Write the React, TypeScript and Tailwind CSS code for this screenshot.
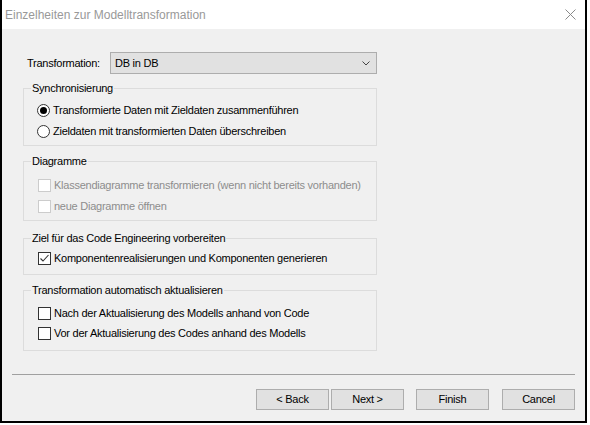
import React from "react";

const font = { fontFamily: '"Liberation Sans", Arial, sans-serif' };

function Radio({ checked, label }: { checked?: boolean; label: string }) {
  return (
    <div className="flex h-[21px] items-center pl-[13px]">
      <svg width="13" height="13" viewBox="0 0 13 13" className="shrink-0">
        <circle cx="6.5" cy="6.5" r="6" fill="#fff" stroke="#333" strokeWidth="1" />
        {checked && <circle cx="6.5" cy="6.5" r="3.5" fill="#000" />}
      </svg>
      <span className="ml-[3px] text-[11px] tracking-[-0.25px] text-black">{label}</span>
    </div>
  );
}

function Check({
  checked,
  disabled,
  label,
  h = "h-[21px]",
}: {
  checked?: boolean;
  disabled?: boolean;
  label: string;
  h?: string;
}) {
  return (
    <div className={`flex ${h} items-center pl-[14px]`}>
      <svg width="13" height="13" viewBox="0 0 13 13" className="shrink-0">
        <rect
          x="0.5"
          y="0.5"
          width="12"
          height="12"
          fill="#fff"
          stroke={disabled ? "#cccccc" : "#333333"}
          strokeWidth="1"
        />
        {checked && (
          <polyline points="2.5,6.5 5,9 10.5,3" fill="none" stroke="#333" strokeWidth="1.1" />
        )}
      </svg>
      <span
        className={`ml-[3px] text-[11px] tracking-[-0.25px] ${
          disabled ? "text-[#8d8d8d]" : "text-black"
        }`}
      >
        {label}
      </span>
    </div>
  );
}

function Btn({ label }: { label: string }) {
  return (
    <div className="flex h-[21px] w-[73px] items-center justify-center border border-[#adadad] bg-[#e1e1e1] text-[11px] tracking-[-0.25px] text-black">
      {label}
    </div>
  );
}

export default function App() {
  return (
    <div className="h-[425px] w-[590px] overflow-hidden bg-white" style={font}>
      <div className="flex h-[423px] w-[587px] flex-col border-x-2 border-b-2 border-black">
        {/* Title bar */}
        <div className="flex h-[29px] shrink-0 items-center justify-between bg-white pl-[3px] pr-[9px]">
          <span className="text-[12px] text-[#999999]">Einzelheiten zur Modelltransformation</span>
          <svg width="11" height="11" viewBox="0 0 11 11">
            <path d="M0.5 0.5 L10.5 10.5 M10.5 0.5 L0.5 10.5" stroke="#8a8a8a" strokeWidth="1" />
          </svg>
        </div>

        {/* Content */}
        <div className="flex flex-1 flex-col bg-[#f0f0f0]">
          {/* Combo row */}
          <div className="mt-[23px] flex items-center pl-[25px]">
            <span className="w-[83px] text-[11px] tracking-[-0.25px] text-black">Transformation:</span>
            <div className="flex h-[22px] w-[267px] items-center justify-between border border-[#adadad] bg-[#e1e1e1] pl-[4px] pr-[6px]">
              <span className="text-[11px] tracking-[-0.25px] text-black">DB in DB</span>
              <svg width="8" height="5" viewBox="0 0 8 5">
                <polyline points="0.5,0.5 4,4 7.5,0.5" fill="none" stroke="#444" strokeWidth="1" />
              </svg>
            </div>
          </div>

          {/* Group 1 */}
          <fieldset className="ml-[21px] mt-[7px] w-[354px] border border-[#dcdcdc] pb-[3px]">
            <legend className="ml-[7px] px-[1px] text-[11px] leading-[14px] tracking-[-0.25px] text-black">
              Synchronisierung
            </legend>
            <div className="pt-[5px]">
              <Radio checked label="Transformierte Daten mit Zieldaten zusammenführen" />
              <Radio label="Zieldaten mit transformierten Daten überschreiben" />
            </div>
          </fieldset>

          {/* Group 2 */}
          <fieldset className="ml-[21px] mt-[8px] w-[354px] border border-[#dcdcdc] pb-[3px]">
            <legend className="ml-[7px] px-[1px] text-[11px] leading-[14px] tracking-[-0.25px] text-black">
              Diagramme
            </legend>
            <div className="pt-[7px]">
              <Check disabled label="Klassendiagramme transformieren (wenn nicht bereits vorhanden)" />
              <Check disabled label="neue Diagramme öffnen" />
            </div>
          </fieldset>

          {/* Group 3 */}
          <fieldset className="ml-[21px] mt-[10px] w-[354px] border border-[#dcdcdc] pb-[5px]">
            <legend className="ml-[7px] px-[1px] text-[11px] leading-[14px] tracking-[-0.25px] text-black">
              Ziel für das Code Engineering vorbereiten
            </legend>
            <div className="pt-[3px]">
              <Check checked label="Komponentenrealisierungen und Komponenten generieren" />
            </div>
          </fieldset>

          {/* Group 4 */}
          <fieldset className="ml-[21px] mt-[8px] w-[354px] border border-[#dcdcdc] pb-[7px]">
            <legend className="ml-[7px] px-[1px] text-[11px] leading-[14px] tracking-[-0.25px] text-black">
              Transformation automatisch aktualisieren
            </legend>
            <div className="pt-[6px]">
              <Check h="h-[20px]" label="Nach der Aktualisierung des Modells anhand von Code" />
              <Check h="h-[20px]" label="Vor der Aktualisierung des Codes anhand des Modells" />
            </div>
          </fieldset>

          {/* Separator */}
          <div className="mx-[10px] mt-[23px] h-px bg-[#a0a0a0]" />

          {/* Buttons */}
          <div className="mt-[14px] flex justify-end pr-[10px]">
            <Btn label="< Back" />
            <div className="ml-[2px]">
              <Btn label="Next >" />
            </div>
            <div className="ml-[12px]">
              <Btn label="Finish" />
            </div>
            <div className="ml-[13px]">
              <Btn label="Cancel" />
            </div>
          </div>
        </div>
      </div>
    </div>
  );
}
